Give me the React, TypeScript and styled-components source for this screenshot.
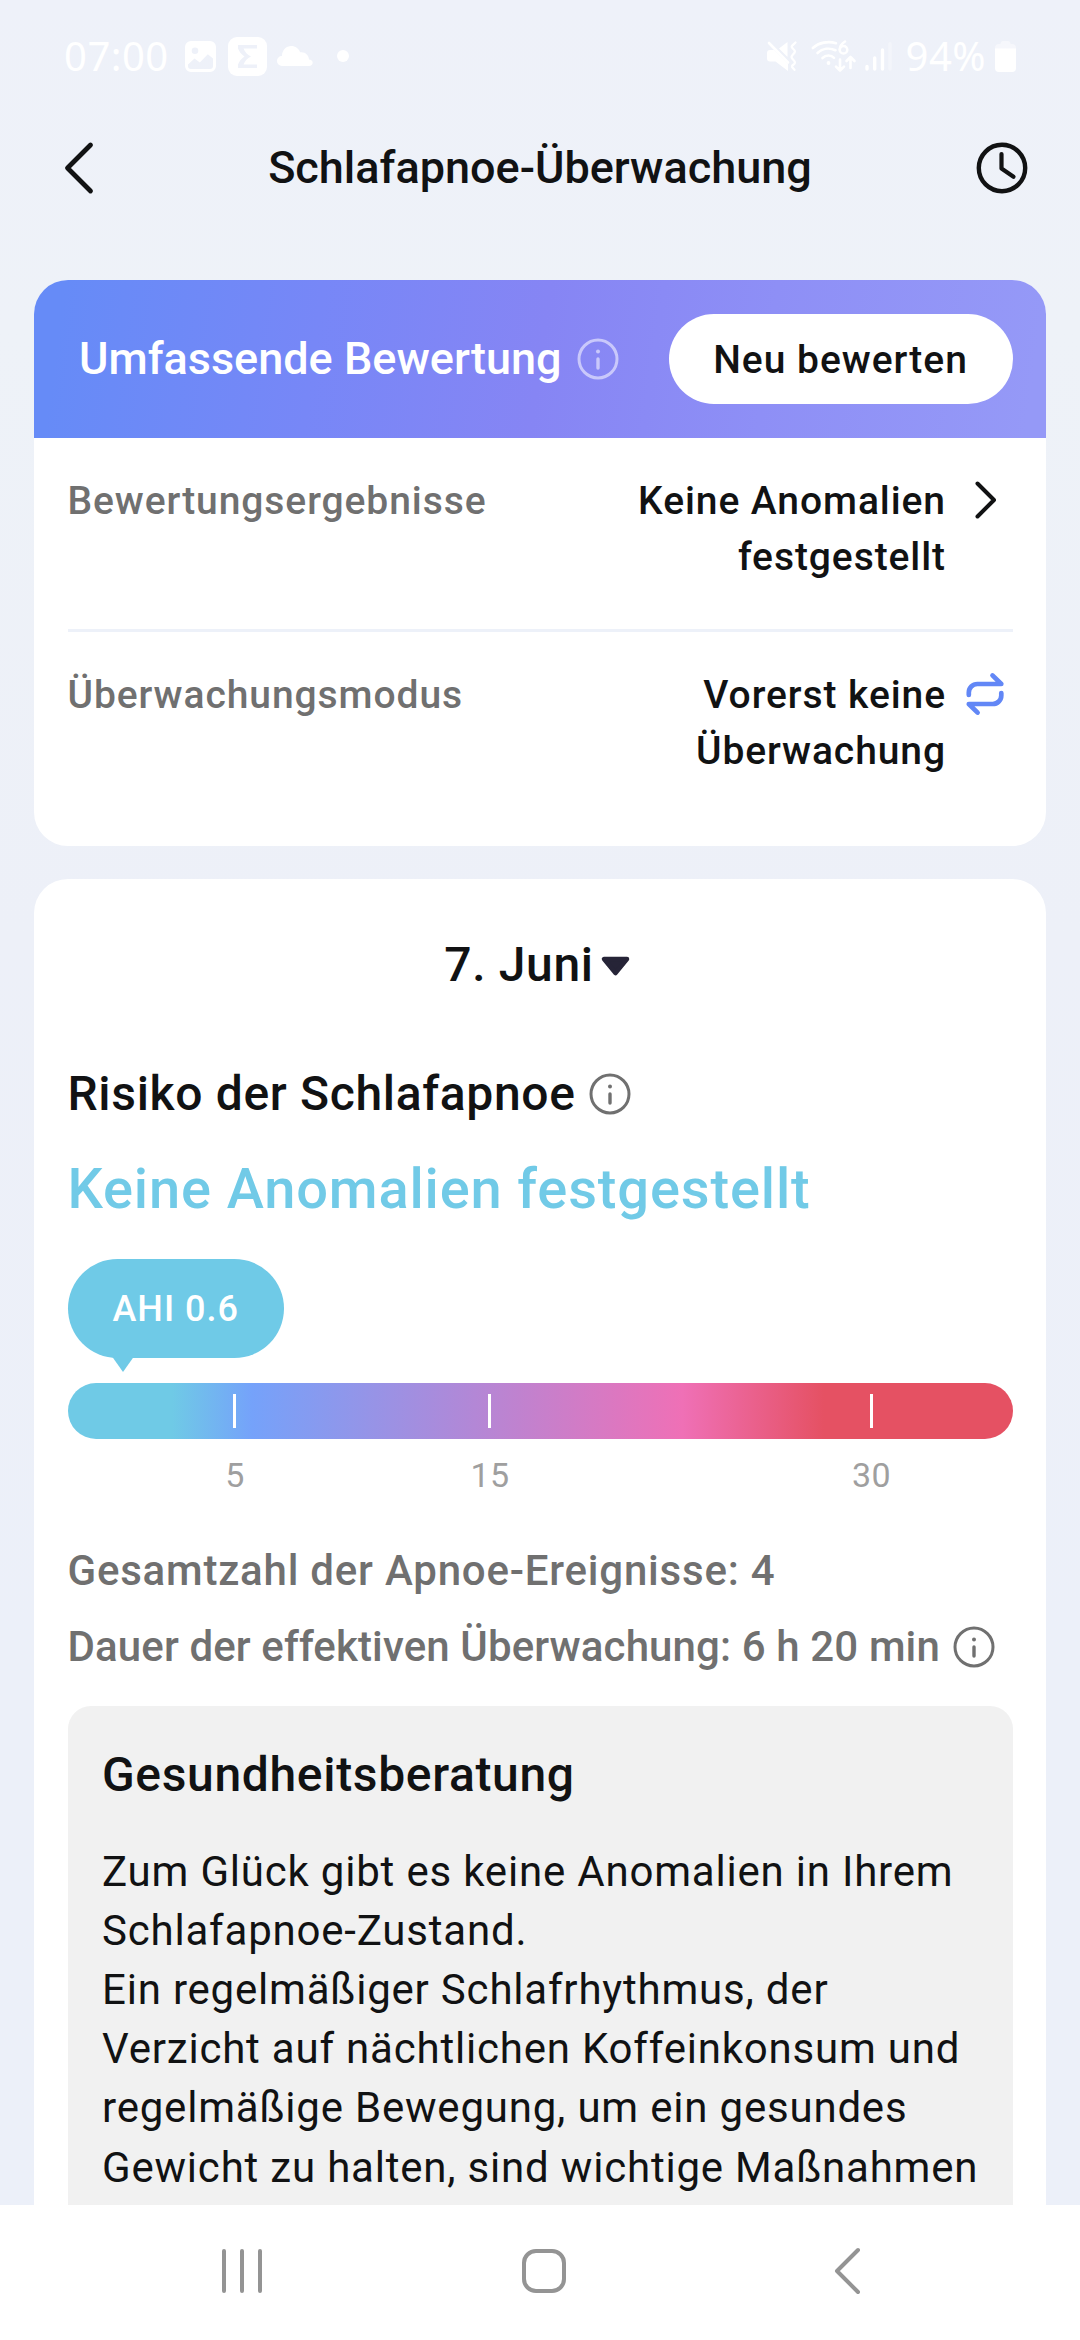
import React from 'react';
import styled, { createGlobalStyle } from 'styled-components';

const GlobalStyle = createGlobalStyle`
  * { box-sizing: border-box; }
  body { margin: 0; background: #eef1f9; }
  button { border: 0; padding: 0; background: none; font: inherit; color: inherit; }
  h1, h2, h3, p { margin: 0; font-weight: inherit; font-size: inherit; }
  svg { display: block; flex: none; overflow: visible; }
`;

const Screen = styled.div`
  width: 1080px;
  height: 2340px;
  display: flex;
  flex-direction: column;
  overflow: hidden;
  background: linear-gradient(180deg, #eef1f9 0%, #eef2f8 14%, #edf0f8 40%, #ecf0f9 70%, #ecf0f9 100%);
  font-family: Roboto, "Noto Sans", sans-serif;
  font-weight: 500;
  color: #111213;
`;

const StatusBar = styled.header`
  height: 112px;
  padding: 0 64px 0 64px;
  display: flex;
  align-items: center;
  justify-content: space-between;
  color: #fff;
`;

const StatusGroup = styled.div`
  display: flex;
  align-items: center;
`;

const StatusText = styled.span`
  font-family: "Noto Sans", Roboto, sans-serif;
  font-weight: 400;
  font-size: 40px;
  line-height: 56px;
  letter-spacing: 0.5px;
  white-space: nowrap;
`;

const Slot = styled.span<{ $left: number }>`
  display: flex;
  margin-left: ${(p) => p.$left}px;
`;

const TopBar = styled.nav`
  height: 111px;
  padding: 0 52px 0 64px;
  display: flex;
  align-items: center;
  justify-content: space-between;
`;

const Title = styled.h1`
  font-size: 45px;
  line-height: 60px;
  padding-left: 10px;
  white-space: nowrap;
`;

const Content = styled.main`
  flex: 1;
  min-height: 0;
  overflow: hidden;
  padding: 57px 34px 0;
  display: flex;
  flex-direction: column;
  gap: 33px;
`;

const Card = styled.section`
  flex: none;
  background: #fff;
  border-radius: 34px;
  overflow: hidden;
`;

const RatingHeader = styled.div`
  height: 158px;
  padding: 0 33.5px 0 45px;
  display: flex;
  align-items: center;
  background: linear-gradient(98deg, #668bf7 3%, #7787f7 28%, #8685f4 50%, #8e8ff6 72%, #9599f7 98%);
  color: #fff;
`;

const RatingTitle = styled.h2`
  font-size: 45px;
  line-height: 60px;
  margin-right: 15px;
  white-space: nowrap;
`;

const PillButton = styled.button`
  margin-left: auto;
  width: 344px;
  height: 90px;
  padding-top: 1px;
  border-radius: 45px;
  background: #fff;
  color: #111213;
  font-size: 39px;
  letter-spacing: 0.98px;
`;

const RatingBody = styled.div`
  padding: 0 33.5px 22.5px;
`;

const SettingRow = styled.div<{ $divided?: boolean }>`
  display: flex;
  align-items: flex-start;
  padding: 35px 0 44px;
  border-bottom: ${(p) => (p.$divided ? '3px solid #edf1f9' : '0')};
  font-size: 39px;
  line-height: 56px;
  letter-spacing: 0.92px;
`;

const SettingLabel = styled.span`
  color: #707070;
`;

const SettingValue = styled.span`
  margin-left: auto;
  width: 340px;
  text-align: right;
`;

const RowIcon = styled.span`
  width: 66.5px;
  height: 54px;
  padding-left: 12px;
  display: flex;
  align-items: center;
  justify-content: center;
`;

const ReportCard = styled(Card)`
  padding: 56.5px 33.5px 0;
`;

const DateButton = styled.button`
  width: 100%;
  height: 60px;
  padding-right: 6px;
  display: flex;
  align-items: center;
  justify-content: center;
  gap: 7px;
  font-size: 48px;
  line-height: 60px;
  letter-spacing: 0.66px;
`;

const RiskHeading = styled.div`
  margin-top: 69px;
  height: 59px;
  display: flex;
  align-items: center;
  gap: 13px;
  font-size: 48px;
  line-height: 60px;
  letter-spacing: 0.66px;
`;

const RiskResult = styled.p`
  margin-top: 27px;
  font-size: 56px;
  line-height: 78px;
  letter-spacing: 0.85px;
  color: #71cae7;
`;

const Bubble = styled.div`
  position: relative;
  margin-top: 31px;
  width: 216.5px;
  height: 98.5px;
  border-radius: 50px;
  background: #6fcae7;
  color: #fff;
  font-size: 36px;
  line-height: 100px;
  letter-spacing: 1px;
  text-align: center;

  &::after {
    content: "";
    position: absolute;
    left: 43px;
    top: 96px;
    border: solid transparent;
    border-width: 17.5px 12px 0;
    border-top-color: #6fcae7;
  }
`;

const ScaleBar = styled.div`
  margin-top: 25px;
  height: 56.5px;
  border-radius: 28.5px;
  display: flex;
  align-items: center;
  background: linear-gradient(90deg, #6fcae6 0%, #6fcae6 11%, #75a2fa 19.5%, #b387d6 43%, #ef70b6 65%, #e55163 80%, #e55163 100%);
`;

const Segment = styled.div<{ $width: number }>`
  width: ${(p) => p.$width}px;
  display: flex;
  justify-content: flex-end;
`;

const Tick = styled.i`
  width: 3px;
  height: 34px;
  margin-right: -1.5px;
  background: #fff;
`;

const ScaleLabels = styled.div`
  margin-top: 15.5px;
  display: flex;
  font-size: 34px;
  font-weight: 400;
  line-height: 40px;
  letter-spacing: 0.5px;
  color: #9f9f9f;
`;

const TickLabel = styled.span`
  width: 80px;
  margin-right: -40.5px;
  text-align: center;
`;

const Metrics = styled.div`
  margin-top: 38px;
  color: #707070;
  font-size: 42px;
  line-height: 76px;
`;

const Metric = styled.div<{ $spacing: number }>`
  height: 76px;
  display: flex;
  align-items: center;
  gap: 13px;
  white-space: nowrap;
  letter-spacing: ${(p) => p.$spacing}px;
`;

const Advice = styled.article`
  margin-top: 21px;
  padding: 39px 30px 60px 34.5px;
  border-radius: 23px;
  background: #f1f1f1;
`;

const AdviceTitle = styled.h3`
  font-size: 48px;
  line-height: 59px;
  letter-spacing: 0.66px;
`;

const AdviceText = styled.p`
  margin-top: 38px;
  font-size: 42px;
  font-weight: 400;
  line-height: 59.2px;
  letter-spacing: 0.8px;
  white-space: pre;
`;

const SystemNav = styled.footer`
  height: 135px;
  flex: none;
  padding: 0 219px 4px;
  background: #fff;
  display: flex;
  align-items: center;
`;

const InfoIcon = ({ color }: { color: string }) => (
  <svg width="42" height="42" viewBox="0 0 42 42" fill="none" stroke={color}>
    <circle cx="21" cy="21" r="19" strokeWidth="3" />
    <path d="M21 21v9" strokeWidth="3.4" strokeLinecap="round" />
    <circle cx="21" cy="13.4" r="2" fill={color} stroke="none" />
  </svg>
);

const GalleryIcon = () => (
  <svg width="31" height="31" viewBox="0 0 31 31">
    <path
      fill="#fff"
      fillRule="evenodd"
      d="M6 0h19a6 6 0 0 1 6 6v19a6 6 0 0 1-6 6H6a6 6 0 0 1-6-6V6a6 6 0 0 1 6-6zM10 6.4a3.3 3.3 0 1 0 0 6.6 3.3 3.3 0 0 0 0-6.6zM3 23.500V25a3 3 0 0 0 3 3h19a3 3 0 0 0 3-3v-7.500L22.800 13.200l-8 8.300L9.500 17.500z"
    />
  </svg>
);

const SigmaIcon = () => (
  <svg width="39" height="39" viewBox="0 0 39 39">
    <rect width="39" height="39" rx="9" fill="#fff" />
    <path
      fill="#eef1f9"
      d="M10 8h19v3.500H15.500c1.500 3.500 3.800 6.300 7.500 8-3.700 1.700-6 4.500-7.500 8H29V31H10v-3.500c1.300-3.300 3.300-6 6.500-8-3.200-2-5.200-4.700-6.500-8z"
    />
  </svg>
);

const CloudIcon = () => (
  <svg width="36" height="20" viewBox="0 0 36 20">
    <path
      fill="#fff"
      d="M5 20a5 5 0 0 1-5-5c0-2.900 2.300-5 5-5C5 4 9.200 0 14.300 0c4 0 7.600 2.500 8.900 6.300C28 5.500 31.800 9 32 13.500c2.200 0 3.700 1.300 3.700 3.200S34.200 20 32 20z"
    />
  </svg>
);

const MuteIcon = () => (
  <svg width="30" height="30" viewBox="0 0 30 30" fill="none" stroke="#fff" strokeLinecap="round" strokeLinejoin="round">
    <path d="M2 2l19 19.500" strokeWidth="2.600" />
    <path d="M12 7.500L20.500 1v15z" fill="#fff" stroke="none" />
    <path d="M0 12a3 3 0 0 1 3-3h4l14 14v7L8.500 20.500H3a3 3 0 0 1-3-3z" fill="#fff" stroke="none" />
    <path d="M28.500 1.500l-3 2.800c-1.200 1.200-1 2 .3 3.200 2.800 2.600 2.800 3.400.2 6-2 2-2 3 0 5 2.600 2.600 2.600 3.600 0 5.500-1.300 1-1.300 1.700-.3 2.800l1.800 2" strokeWidth="2.300" />
  </svg>
);

const WifiIcon = () => (
  <svg width="45" height="32" viewBox="0 0 45 32" fill="none" stroke="#fff" strokeLinecap="round">
    <path d="M1.800 8C8 2.500 17 .8 25 3.200" strokeWidth="2.600" />
    <path d="M6.500 13c5-4.500 12-5.500 18-2.800" strokeWidth="2.600" />
    <path d="M11.500 18c3.500-3.200 8.500-3.200 11.500-.2" strokeWidth="2.600" />
    <circle cx="17.500" cy="23" r="1.900" fill="#fff" stroke="none" />
    <path d="M34 1.500c-3 1.800-5.200 5-5.200 8.300" strokeWidth="2.600" />
    <circle cx="32.500" cy="9.800" r="3.800" strokeWidth="2.500" />
    <path d="M29 19.500v11M25 26.700l4 4 4-4M39.500 28V17M35.500 21l4-4 4 4" strokeWidth="2.600" strokeLinejoin="round" />
  </svg>
);

const SignalIcon = () => (
  <svg width="27" height="29" viewBox="0 0 27 29" stroke="#fff" strokeWidth="3.400" strokeLinecap="round">
    <path d="M2 24.500V27M9.700 16v11M17.500 8v19" />
    <path d="M25 1.700V27" opacity="0.35" />
  </svg>
);

const BatteryIcon = () => (
  <svg width="21" height="31" viewBox="0 0 21 31" fill="#fff">
    <path d="M5.500 3a2.500 2.500 0 0 1 2.500-3h5a2.500 2.500 0 0 1 2.500 3H17a4 4 0 0 1 4 4v1H0V7a4 4 0 0 1 4-4z" opacity="0.45" />
    <path d="M0 7.500h21V27a4 4 0 0 1-4 4H4a4 4 0 0 1-4-4z" />
  </svg>
);

const ticks = [
  { value: 5, width: 167 },
  { value: 15, width: 255 },
  { value: 30, width: 381.5 },
];

const advice = `Zum Glück gibt es keine Anomalien in Ihrem
Schlafapnoe-Zustand.
Ein regelmäßiger Schlafrhythmus, der
Verzicht auf nächtlichen Koffeinkonsum und
regelmäßige Bewegung, um ein gesundes
Gewicht zu halten, sind wichtige Maßnahmen`;

export default function App() {
  return (
    <Screen>
      <GlobalStyle />
      <StatusBar>
        <StatusGroup>
          <StatusText>07:00</StatusText>
          <Slot $left={16}><GalleryIcon /></Slot>
          <Slot $left={12}><SigmaIcon /></Slot>
          <Slot $left={10}><CloudIcon /></Slot>
          <Slot $left={24}>
            <svg width="12" height="12" viewBox="0 0 12 12"><circle cx="6" cy="6" r="6" fill="#fff" /></svg>
          </Slot>
        </StatusGroup>
        <StatusGroup>
          <MuteIcon />
          <Slot $left={14}><WifiIcon /></Slot>
          <Slot $left={9}><SignalIcon /></Slot>
          <Slot $left={14}><StatusText>94%</StatusText></Slot>
          <Slot $left={9}><BatteryIcon /></Slot>
        </StatusGroup>
      </StatusBar>

      <TopBar>
        <svg width="30" height="52" viewBox="0 0 30 52" fill="none" stroke="#111213" strokeWidth="4.800" strokeLinecap="round" strokeLinejoin="round">
          <path d="M26.500 3L3.500 26l23 23" />
        </svg>
        <Title>Schlafapnoe-Überwachung</Title>
        <svg width="52" height="52" viewBox="0 0 52 52" fill="none" stroke="#111213" strokeLinecap="round" strokeLinejoin="round">
          <circle cx="26" cy="26" r="23.200" strokeWidth="4.400" />
          <path d="M25.500 12v14.500l12 8.300" strokeWidth="4.200" />
        </svg>
      </TopBar>

      <Content>
        <Card>
          <RatingHeader>
            <RatingTitle>Umfassende Bewertung</RatingTitle>
            <InfoIcon color="#c9c8fb" />
            <PillButton>Neu bewerten</PillButton>
          </RatingHeader>
          <RatingBody>
            <SettingRow $divided>
              <SettingLabel>Bewertungsergebnisse</SettingLabel>
              <SettingValue>Keine Anomalien festgestellt</SettingValue>
              <RowIcon>
                <svg width="22" height="38" viewBox="0 0 22 38" fill="none" stroke="#111213" strokeWidth="4" strokeLinecap="round" strokeLinejoin="round">
                  <path d="M3.500 2.500L20 19 3.500 35.500" />
                </svg>
              </RowIcon>
            </SettingRow>
            <SettingRow>
              <SettingLabel>Überwachungsmodus</SettingLabel>
              <SettingValue>Vorerst keine Überwachung</SettingValue>
              <RowIcon>
                <svg width="38" height="42" viewBox="0 0 38 42" fill="none" stroke="#6287f6" strokeWidth="4.700" strokeLinecap="round" strokeLinejoin="round">
                  <path d="M2.800 22v-2.500a8.500 8.500 0 0 1 8.500-8.500h24l-8.800-8.600" />
                  <path d="M35.300 20v2.500a8.500 8.500 0 0 1-8.500 8.500h-24l8.800 8.600" />
                </svg>
              </RowIcon>
            </SettingRow>
          </RatingBody>
        </Card>

        <ReportCard>
          <DateButton>
            7. Juni
            <svg width="29" height="22" viewBox="0 0 29 22">
              <path d="M3 5h23L14.500 19z" fill="#262437" stroke="#262437" strokeWidth="4.500" strokeLinejoin="round" />
            </svg>
          </DateButton>
          <RiskHeading>
            <h2>Risiko der Schlafapnoe</h2>
            <InfoIcon color="#707070" />
          </RiskHeading>
          <RiskResult>Keine Anomalien festgestellt</RiskResult>
          <Bubble>AHI 0.6</Bubble>
          <ScaleBar>
            {ticks.map((t) => (
              <Segment key={t.value} $width={t.width}><Tick /></Segment>
            ))}
          </ScaleBar>
          <ScaleLabels>
            {ticks.map((t) => (
              <Segment key={t.value} $width={t.width}><TickLabel>{t.value}</TickLabel></Segment>
            ))}
          </ScaleLabels>
          <Metrics>
            <Metric $spacing={0.79}>Gesamtzahl der Apnoe-Ereignisse: 4</Metric>
            <Metric $spacing={0.12}>
              Dauer der effektiven Überwachung: 6 h 20 min
              <InfoIcon color="#707070" />
            </Metric>
          </Metrics>
          <Advice>
            <AdviceTitle>Gesundheitsberatung</AdviceTitle>
            <AdviceText>{advice}</AdviceText>
          </Advice>
        </ReportCard>
      </Content>

      <SystemNav>
        <svg width="44" height="44" viewBox="0 0 44 44" stroke="#949494" strokeWidth="4" strokeLinecap="round">
          <path d="M5 2v40M23 2v40M41 2v40" />
        </svg>
        <Slot $left={258}>
          <svg width="46" height="46" viewBox="0 0 46 46" fill="none" stroke="#949494" strokeWidth="4">
            <rect x="3" y="3" width="40" height="40" rx="12" />
          </svg>
        </Slot>
        <Slot $left={267}>
          <svg width="27" height="46" viewBox="0 0 27 46" fill="none" stroke="#949494" strokeWidth="4" strokeLinecap="round" strokeLinejoin="round">
            <path d="M24 2L3 23l21 21" />
          </svg>
        </Slot>
      </SystemNav>
    </Screen>
  );
}
